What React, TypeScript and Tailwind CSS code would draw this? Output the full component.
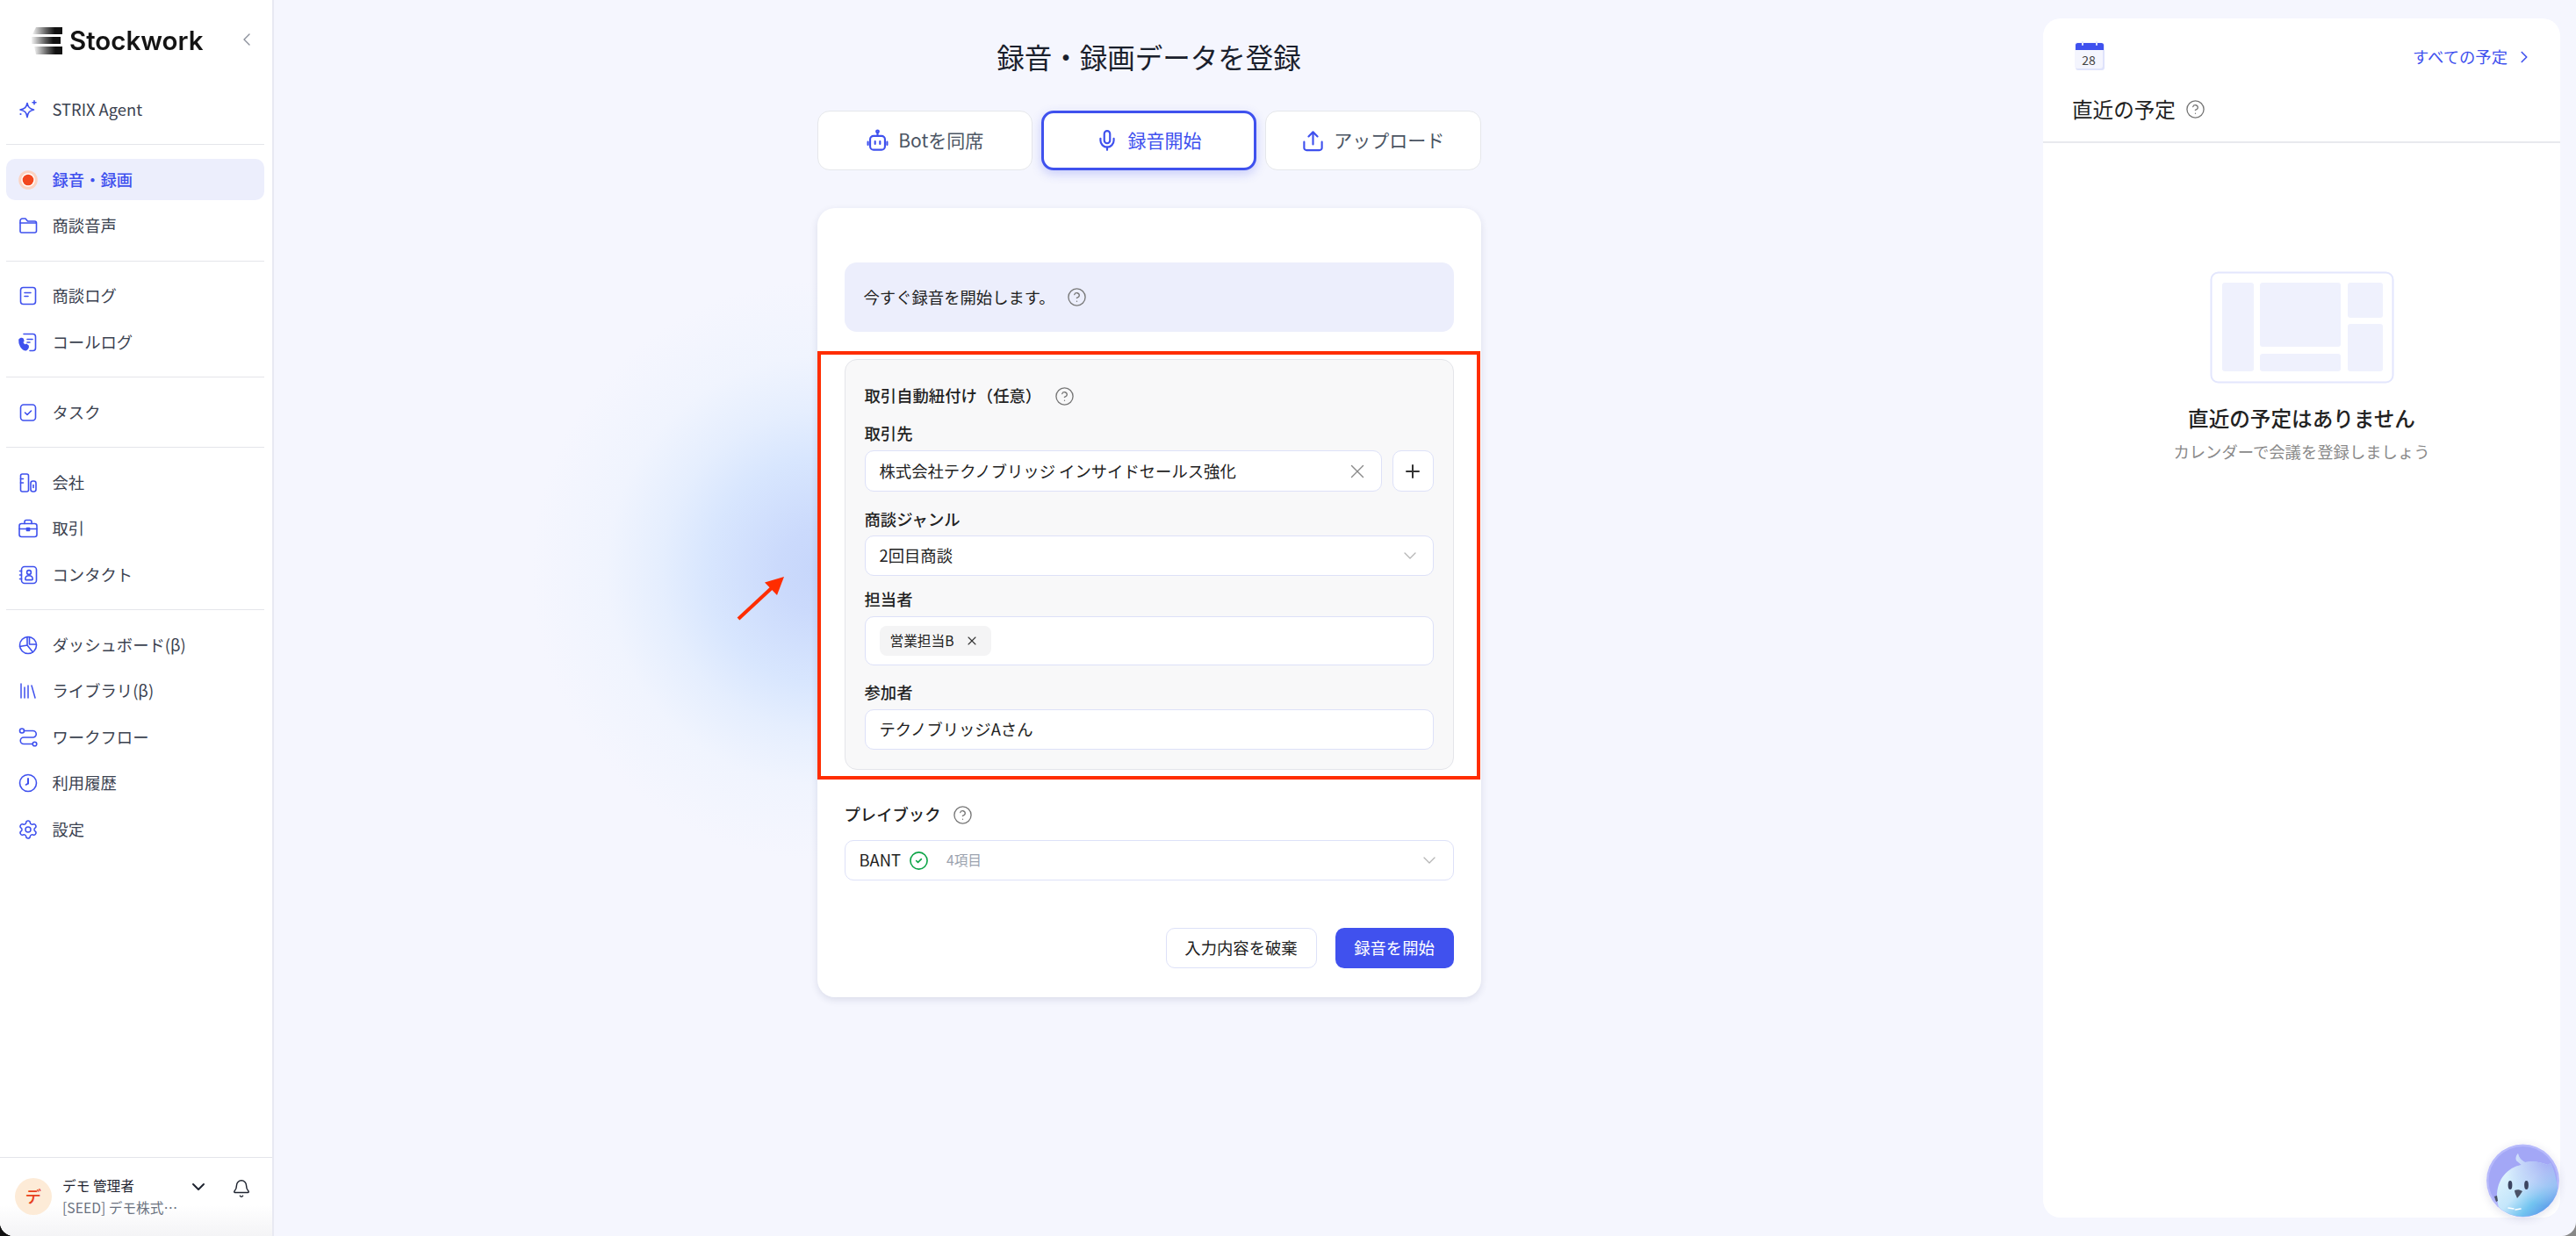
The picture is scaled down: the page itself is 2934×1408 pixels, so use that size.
import React from "react";
import { ChevronDown, ChevronLeft, ChevronRight, CircleCheck, CircleHelp, Library, Mic, Plus, Settings, X, Bell } from "lucide-react";

const I = ({ children, size = 24, sw = 1.6 }: { children: React.ReactNode; size?: number; sw?: number }) => (
  <svg width={size} height={size} viewBox="0 0 24 24" fill="none" stroke="#3f51ee" strokeWidth={sw} strokeLinecap="round" strokeLinejoin="round" className="shrink-0">
    {children}
  </svg>
);

const Spark = () => (
  <I>
    <path d="M11 4.500c.9 4.600 2.600 6.400 7.500 7.500-4.900 1.100-6.600 2.900-7.500 8.500-.9-5.600-2.600-7.400-8-8.500 5.400-1.100 7.100-2.900 8-7.500Z" />
    <path d="M19 1.800v4M17 3.800h4" />
    <circle cx="3.500" cy="17" r="1.100" fill="#3f51ee" stroke="none" />
  </I>
);
const Rec = () => (
  <svg width="24" height="24" viewBox="0 0 24 24">
    <circle cx="12" cy="12" r="10.800" fill="#fbd3c2" />
    <circle cx="12" cy="12" r="7.800" fill="#fff" />
    <circle cx="12" cy="12" r="6.300" fill="#f2471f" />
  </svg>
);
const FolderI = () => (
  <I>
    <path d="M3 6.500a2.500 2.500 0 0 1 2.500-2.500H9l2.500 3h8a2 2 0 0 1 2 2v9a2 2 0 0 1-2 2h-15A1.500 1.500 0 0 1 3 18.500Z" />
    <path d="M3 9h18" />
  </I>
);
const LogI = () => (
  <I>
    <rect x="3.500" y="2.500" width="17" height="19" rx="3" />
    <path d="M8 8.500h7M8 12.500h4" />
  </I>
);
const CallI = () => (
  <I>
    <path d="M7 2.500h10.500a3 3 0 0 1 3 3v13a3 3 0 0 1-3 3H14" />
    <path d="M11 8.500h6M11 12h3" />
    <path d="M2 9c1-1.500 3-2 4-1l.8 2.500-1.300 1.300c.5 1.500 1.500 2.700 3 3.500l1.500-1 2 1.500c.5 2-.7 4-2.500 5C4.500 20 1.500 14 2 9Z" fill="#3f51ee" />
  </I>
);
const TaskI = () => (
  <I>
    <rect x="3.500" y="3" width="17" height="18" rx="3.500" />
    <path d="m8.500 12 2.500 2.500 4.500-4.500" />
  </I>
);
const CompanyI = () => (
  <I>
    <rect x="3.500" y="2" width="9" height="20" rx="2" />
    <path d="M3.500 7.500h3M3.500 12h3" />
    <rect x="15" y="10" width="6" height="12" rx="2.500" />
    <path d="M18 14.500v3" />
  </I>
);
const DealI = () => (
  <I>
    <rect x="2" y="6.500" width="20" height="15" rx="2.500" />
    <path d="M8 6.500V4.500a2 2 0 0 1 2-2h4a2 2 0 0 1 2 2v2M2 12.500h20" />
    <rect x="10.500" y="11.500" width="3" height="3" fill="#3f51ee" />
  </I>
);
const ContactI = () => (
  <I>
    <rect x="4.500" y="2.500" width="17" height="19" rx="3.500" />
    <circle cx="13" cy="9" r="2.400" />
    <path d="M8.800 16.800c0-2.500 1.700-4.100 4.200-4.100s4.200 1.600 4.200 4.100c0 .5-.3.800-.8.800H9.600c-.5 0-.8-.3-.8-.8Z" />
    <path d="M2.500 7.500h2M2.500 12h2M2.500 16.500h2" />
  </I>
);
const PieI = () => (
  <I>
    <circle cx="12" cy="12" r="9.500" />
    <path d="M11 2.500V12l-8.500 1.500M11 12l6.500 8M13.500 2.600V11h8" />
  </I>
);
const FlowI = () => (
  <I>
    <circle cx="5" cy="4.500" r="2.500" />
    <path d="M7.500 4.500h10a3.500 3.500 0 0 1 0 7.500H7a3.700 3.700 0 0 0 0 7.500h10" />
    <circle cx="19.500" cy="19.500" r="2.300" />
  </I>
);
const ClockI = () => (
  <I>
    <circle cx="12" cy="12" r="9.500" />
    <path d="M12 7v5.500" strokeWidth="2" />
    <path d="M12 12.500 9.500 14" />
  </I>
);
const BotI = () => (
  <I size={27} sw={1.9}>
    <circle cx="12" cy="2.500" r="1.200" />
    <path d="M12 3.800V7" />
    <rect x="4.500" y="7" width="15" height="14" rx="3.500" />
    <path d="M9.500 12.500v2.500M14.500 12.500v2.500M2.300 13v3M21.700 13v3" />
  </I>
);
const UploadI = () => (
  <I size={27} sw={1.9}>
    <path d="M12 15.500V3M7.500 7.500 12 3l4.500 4.500" />
    <path d="M3 13v6a2.500 2.500 0 0 0 2.500 2.500h13A2.500 2.500 0 0 0 21 19v-6" />
  </I>
);

const Row = ({ icon, label, active }: { icon: React.ReactNode; label: string; active?: boolean }) => (
  <div className={`flex h-[47px] items-center gap-[15.500px] rounded-[10px] pl-[13px] text-[18.330px] ${active ? "bg-[#eceefc] font-medium text-[#3f51ee]" : "text-[#3b4250]"}`}>
    <span className="flex h-[24px] w-[24px] shrink-0 items-center justify-center">{icon}</span>
    {label}
  </div>
);
const Group = ({ children }: { children: React.ReactNode }) => <div className="flex flex-col gap-[5.5px]">{children}</div>;
const Divider = () => <div className="my-[16px] h-px bg-[#e4e5ea]" />;

const Help = ({ className = "" }: { className?: string }) => <CircleHelp size={23} strokeWidth={1.4} className={`shrink-0 text-[#777] ${className}`} />;
const Label = ({ children, className = "" }: { children: React.ReactNode; className?: string }) => (
  <div className={`-translate-y-px text-[18.330px] font-medium leading-[26px] text-[#222] ${className}`}>{children}</div>
);
const Field = ({ children, className = "" }: { children: React.ReactNode; className?: string }) => (
  <div className={`flex items-center rounded-[10px] border border-[#dde1f8] bg-white text-[18.330px] text-[#222] ${className}`}>{children}</div>
);

const Tab = ({ icon, label, active }: { icon: React.ReactNode; label: string; active?: boolean }) => (
  <div className={`flex h-[68px] items-center justify-center gap-[10px] rounded-[14px] bg-white text-[21px] ${active ? "border-[3px] border-[#3f51ee] text-[#3f51ee] shadow-[0_4px_12px_rgba(63,81,238,0.25)]" : "border border-[#e5e7eb] text-[#4b5563]"}`}>
    {icon}
    {label}
  </div>
);

const Logo = () => (
  <svg width="36" height="32" viewBox="0 0 36 32" className="shrink-0 blur-[0.7px]">
    <defs>
      <linearGradient id="lg" x1="0" x2="1" y1="0" y2="0">
        <stop offset="0" stopColor="#111" stopOpacity="0.05" />
        <stop offset="0.45" stopColor="#111" stopOpacity="0.65" />
        <stop offset="0.75" stopColor="#111" />
      </linearGradient>
    </defs>
    <path d="M6 1h30v8H2Z" fill="url(#lg)" />
    <path d="M1 12h33v8H1Z" fill="url(#lg)" />
    <path d="M4 23h32v9H6Z" fill="url(#lg)" />
  </svg>
);

const Calendar = () => (
  <svg width="36" height="34" viewBox="0 0 36 34">
    <rect x="2" y="3" width="33" height="31" rx="3" fill="#dfe3fb" />
    <rect x="1" y="2" width="32" height="30" rx="3" fill="#f4f5fe" />
    <path d="M2 11V5.500A2.500 2.500 0 0 1 4.500 3h27A2.500 2.500 0 0 1 34 5.500V11Z" fill="#3f51ee" />
    <rect x="9" y="1" width="2" height="5" rx="1" fill="#dfe3fb" />
    <rect x="25" y="1" width="2" height="5" rx="1" fill="#dfe3fb" />
    <text x="17" y="28" fontSize="14" textAnchor="middle" fill="#444" fontFamily="Noto Sans CJK JP, sans-serif">28</text>
  </svg>
);

const Empty = () => (
  <svg width="210" height="128" viewBox="0 0 210 128">
    <rect x="1.500" y="1.500" width="207" height="125" rx="8" fill="#fff" stroke="#e3e6fd" strokeWidth="2" />
    <rect x="14" y="13" width="36" height="101" rx="3" fill="#eff1fd" />
    <rect x="57" y="13" width="92" height="73" rx="3" fill="#eff1fd" />
    <rect x="57" y="94" width="92" height="20" rx="3" fill="#eff1fd" />
    <rect x="157" y="13" width="40" height="40" rx="3" fill="#eff1fd" />
    <rect x="157" y="60" width="40" height="54" rx="3" fill="#eff1fd" />
  </svg>
);

const Mascot = () => (
  <svg width="83" height="84" viewBox="0 0 83 84">
    <defs>
      <linearGradient id="bird" x1="0.05" y1="0.25" x2="0.75" y2="1">
        <stop offset="0" stopColor="#e3f5fd" />
        <stop offset="0.45" stopColor="#c4e6fb" />
        <stop offset="0.72" stopColor="#72c4f0" />
        <stop offset="1" stopColor="#5a94e8" />
      </linearGradient>
      <radialGradient id="top" cx="0.85" cy="0.05" r="0.75">
        <stop offset="0" stopColor="#9ea6f3" />
        <stop offset="0.6" stopColor="#b9c6f7" stopOpacity="0.6" />
        <stop offset="1" stopColor="#b9c6f7" stopOpacity="0" />
      </radialGradient>
      <clipPath id="cc"><circle cx="41.500" cy="42" r="41" /></clipPath>
    </defs>
    <circle cx="41.500" cy="42" r="41.500" fill="#b6b9fb" />
    <circle cx="41.500" cy="42" r="39" fill="#a3a7f6" />
    <g clipPath="url(#cc)">
      <path d="M12 60c0-20 12-33 28-36l-6-5c-1-3 0-6 2-8 1 5 4 8 8 10 9-2 18 0 26 3l3-2c4 8 8 20 8 34 0 16-10 30-33 30C20 86 12 76 12 60Z" fill="url(#bird)" />
      <path d="M12 60c0-20 12-33 28-36l-6-5c-1-3 0-6 2-8 1 5 4 8 8 10 9-2 18 0 26 3l3-2c4 8 8 20 8 34 0 16-10 30-33 30C20 86 12 76 12 60Z" fill="url(#top)" />
      <ellipse cx="27" cy="47" rx="2.400" ry="5" fill="#3c4460" />
      <ellipse cx="45.500" cy="47" rx="2.400" ry="5" fill="#3c4460" />
      <path d="M32 53c3-1.500 6-1 9 1-2 3-4 6-6 8-1-3-3-6-3-9Z" fill="#4b5266" />
      <path d="M25 73l6 1M33 75l6-1" stroke="#fff" strokeWidth="1.500" strokeLinecap="round" />
      <path d="M9 60l3-1 1 6-2 1Z" fill="#4b5266" />
    </g>
  </svg>
);

export default function App() {
  return (
    <div className="h-[1408px] w-[2934px] overflow-hidden bg-gradient-to-r from-[#111] to-[#888] font-['Noto_Sans_CJK_JP','Noto_Sans',sans-serif]">
      <div className="relative flex h-full w-full overflow-hidden rounded-b-[16px] bg-[#f5f6fe]">
        {/* glow behind the form */}
        <div className="absolute left-[605px] top-[320px] h-[660px] w-[660px] bg-[radial-gradient(circle_closest-side,#c6d6fb_0%,#cbdafc_15%,#d8e6fe_39%,#e5eefe_55%,#f0f4fe_74%,#f5f6fe_100%)]" />

        <aside className="relative flex w-[312px] shrink-0 flex-col border-r-2 border-[#e8e9f2] bg-white">
          <div className="flex h-[101px] items-start pl-[35px] pr-[17px] pt-[30px]">
            <Logo />
            <span className="ml-[8px] font-['Inter',sans-serif] text-[29.500px] font-semibold leading-[32px] text-[#141414] blur-[0.5px]">Stockwork</span>
            <ChevronLeft size={24} strokeWidth={1.4} className="ml-auto mt-[3px] text-[#8a8f9a]" />
          </div>
          <div className="pl-[7px] pr-[9px]">
            <Group><Row icon={<Spark />} label="STRIX Agent" /></Group>
            <Divider />
            <Group>
              <Row icon={<Rec />} label="録音・録画" active />
              <Row icon={<FolderI />} label="商談音声" />
            </Group>
            <Divider />
            <Group>
              <Row icon={<LogI />} label="商談ログ" />
              <Row icon={<CallI />} label="コールログ" />
            </Group>
            <Divider />
            <Group><Row icon={<TaskI />} label="タスク" /></Group>
            <Divider />
            <Group>
              <Row icon={<CompanyI />} label="会社" />
              <Row icon={<DealI />} label="取引" />
              <Row icon={<ContactI />} label="コンタクト" />
            </Group>
            <Divider />
            <Group>
              <Row icon={<PieI />} label="ダッシュボード(β)" />
              <Row icon={<Library size={24} strokeWidth={1.5} className="text-[#3f51ee]" />} label="ライブラリ(β)" />
              <Row icon={<FlowI />} label="ワークフロー" />
              <Row icon={<ClockI />} label="利用履歴" />
              <Row icon={<Settings size={24} strokeWidth={1.5} className="text-[#3f51ee]" />} label="設定" />
            </Group>
          </div>
          <div className="mt-auto flex h-[90px] items-start border-t border-[#e4e5ea] bg-gradient-to-b from-white from-60% to-[#f4f4f6] pl-[17px] pt-[23px]">
            <div className="flex h-[42px] w-[42px] shrink-0 items-center justify-center rounded-full bg-[#fdebd7] text-[18.330px] font-medium text-[#e8401c]">デ</div>
            <div className="-mt-[4px] ml-[12px] w-[136px] whitespace-nowrap text-[15.700px] leading-[25px]">
              <div className="text-[#1f2430]">デモ 管理者</div>
              <div className="text-[#6b7280]">[SEED] デモ株式…</div>
            </div>
            <ChevronDown size={24} strokeWidth={2} className="-mt-[2px] ml-[7px] text-[#1f2430]" />
            <Bell size={22} strokeWidth={1.6} className="ml-[26px] mt-[1px] text-[#1f2430]" />
          </div>
        </aside>

        <main className="relative flex min-w-0 flex-1 justify-center pr-[22px]">
          <div className="w-[756px]">
            <h1 className="mt-[40px] text-center text-[31.500px] font-normal leading-[48px] text-[#1a202c]">録音・録画データを登録</h1>
            <div className="mt-[38px] grid grid-cols-3 gap-[9.500px]">
              <Tab icon={<BotI />} label="Botを同席" />
              <Tab icon={<Mic size={26} strokeWidth={2} />} label="録音開始" active />
              <Tab icon={<UploadI />} label="アップロード" />
            </div>
            <div className="mt-[43px] rounded-[20px] bg-white px-[31px] pb-[33px] pt-[62px] shadow-[0_3px_8px_rgba(30,40,90,0.12)]">
              <div className="flex h-[79px] items-center gap-[13px] rounded-[14px] bg-[#eceefc] pl-[22px] text-[18.330px] text-[#222]">
                今すぐ録音を開始します。
                <Help />
              </div>

              <div className="relative mt-[31px] rounded-[14px] border border-[#e4e5ea] bg-[#f8f8f9] px-[22px] pb-[22px] pt-[28px]">
                <div className="pointer-events-none absolute -bottom-[12px] -left-[32px] -right-[31px] -top-[10px] border-[4px] border-[#ff2d00]" />
                <div className="flex items-center gap-[15px]">
                  <Label>取引自動紐付け（任意）</Label>
                  <Help />
                </div>
                <Label className="mt-[17px]">取引先</Label>
                <div className="mt-[6px] flex gap-[12px]">
                  <Field className="h-[47px] flex-1 justify-between pl-[16px] pr-[14px]">
                    株式会社テクノブリッジ インサイドセールス強化
                    <X size={26} strokeWidth={1.3} className="text-[#8a8a8a]" />
                  </Field>
                  <Field className="h-[47px] w-[47px] justify-center">
                    <Plus size={24} strokeWidth={2} className="text-[#333]" />
                  </Field>
                </div>
                <Label className="mt-[19px]">商談ジャンル</Label>
                <Field className="mt-[5px] h-[46px] justify-between pl-[16px] pr-[14px]">
                  2回目商談
                  <ChevronDown size={24} strokeWidth={1.3} className="text-[#b5b5b5]" />
                </Field>
                <Label className="mt-[14px]">担当者</Label>
                <Field className="mt-[6px] h-[56px] pl-[16px]">
                  <span className="flex h-[34px] items-center gap-[12px] rounded-[8px] bg-[#f4f4f5] pl-[12px] pr-[14px] text-[15.700px] text-[#222]">
                    営業担当B
                    <X size={16} strokeWidth={1.6} className="text-[#333]" />
                  </span>
                </Field>
                <Label className="mt-[18px]">参加者</Label>
                <Field className="mt-[6px] h-[46px] pl-[16px]">テクノブリッジAさん</Field>
              </div>

              <div className="mt-[38px] flex items-center gap-[14px]">
                <Label>プレイブック</Label>
                <Help />
              </div>
              <Field className="mt-[16px] h-[46px] pl-[16px] pr-[15px]">
                BANT
                <CircleCheck size={23} strokeWidth={1.7} className="ml-[9px] text-[#0ea548]" />
                <span className="ml-[20px] text-[15.700px] text-[#9ca3af]">4項目</span>
                <ChevronDown size={24} strokeWidth={1.3} className="ml-auto text-[#b5b5b5]" />
              </Field>
              <div className="mt-[54px] flex justify-end gap-[21px]">
                <button className="h-[46px] w-[172px] rounded-[10px] border border-[#dde1f8] bg-white text-[18.330px] text-[#222]">入力内容を破棄</button>
                <button className="h-[46px] w-[135px] rounded-[10px] bg-[#4051ee] text-[18.330px] text-white">録音を開始</button>
              </div>
            </div>
          </div>
        </main>

        <section className="relative my-[21px] mr-[18px] flex w-[589px] shrink-0 flex-col rounded-[20px] bg-white">
          <div className="flex h-[142px] flex-col border-b-2 border-[#e8e9ee] px-[33px]">
            <div className="flex items-start justify-between pl-[2px] pt-[25px]">
              <Calendar />
              <div className="-mr-[3px] mt-[5px] flex items-center gap-[8px] text-[18.330px] text-[#3f51ee]">
                すべての予定
                <ChevronRight size={22} strokeWidth={1.8} />
              </div>
            </div>
            <div className="mt-[27px] flex items-center gap-[11px] text-[23.600px] leading-[34px] text-[#222]">
              直近の予定
              <Help />
            </div>
          </div>
          <div className="flex flex-col items-center pt-[146px]">
            <Empty />
            <div className="mt-[22px] text-[23.600px] font-medium leading-[34px] text-[#222]">直近の予定はありません</div>
            <div className="mt-[8px] text-[18.330px] leading-[26px] text-[#8a8a8a]">カレンダーで会議を登録しましょう</div>
          </div>
        </section>

        {/* annotation arrow */}
        <svg width="60" height="56" viewBox="0 0 60 56" className="pointer-events-none absolute left-[838px] top-[654px]">
          <path d="M3 51 45 12" stroke="#ff2d00" strokeWidth="4" />
          <path d="M55 3 33 9.500 47 24Z" fill="#ff2d00" />
        </svg>

        <div className="absolute bottom-[21px] right-[19px] rounded-full shadow-[0_2px_10px_rgba(60,60,120,0.15)]">
          <Mascot />
        </div>
      </div>
    </div>
  );
}
